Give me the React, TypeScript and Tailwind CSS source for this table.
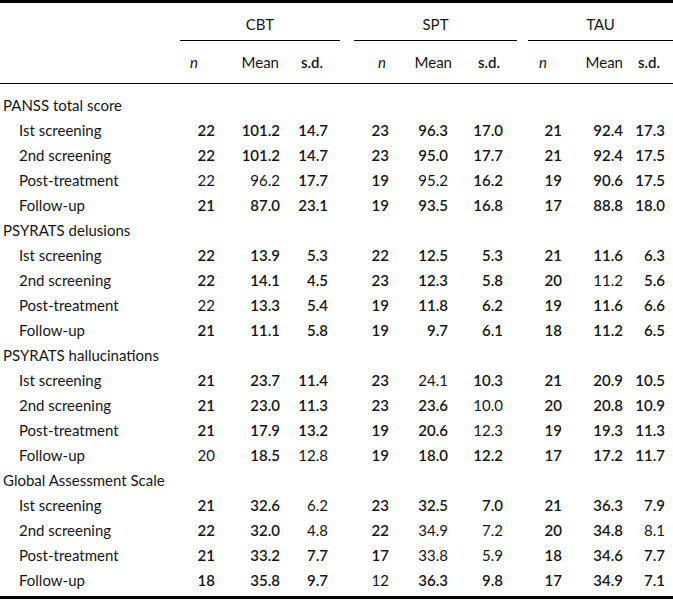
const rowGrid =
  'grid grid-cols-[180px_35px_65px_48px_61px_59px_55px_59px_61px_42px_8px] items-center';

// cells written as "r:" are set in regular weight, the rest in bold
type Row = { label: string; cells: string[] };
type Section = { title: string; rows: Row[] };

const sections: Section[] = [
  {
    title: 'PANSS total score',
    rows: [
      { label: 'Ist screening', cells: ['22', '101.2', '14.7', '23', '96.3', '17.0', '21', '92.4', '17.3'] },
      { label: '2nd screening', cells: ['22', '101.2', '14.7', '23', '95.0', '17.7', '21', '92.4', '17.5'] },
      { label: 'Post-treatment', cells: ['r:22', 'r:96.2', '17.7', '19', 'r:95.2', '16.2', '19', '90.6', '17.5'] },
      { label: 'Follow-up', cells: ['21', '87.0', '23.1', '19', '93.5', '16.8', '17', '88.8', '18.0'] },
    ],
  },
  {
    title: 'PSYRATS delusions',
    rows: [
      { label: 'Ist screening', cells: ['22', '13.9', '5.3', '22', '12.5', '5.3', '21', '11.6', '6.3'] },
      { label: '2nd screening', cells: ['22', '14.1', '4.5', '23', '12.3', '5.8', '20', 'r:11.2', '5.6'] },
      { label: 'Post-treatment', cells: ['r:22', '13.3', '5.4', '19', '11.8', '6.2', '19', '11.6', '6.6'] },
      { label: 'Follow-up', cells: ['21', '11.1', '5.8', '19', '9.7', '6.1', '18', '11.2', '6.5'] },
    ],
  },
  {
    title: 'PSYRATS hallucinations',
    rows: [
      { label: 'Ist screening', cells: ['21', '23.7', '11.4', '23', 'r:24.1', '10.3', '21', '20.9', '10.5'] },
      { label: '2nd screening', cells: ['21', '23.0', '11.3', '23', '23.6', 'r:10.0', '20', '20.8', '10.9'] },
      { label: 'Post-treatment', cells: ['21', '17.9', '13.2', '19', '20.6', 'r:12.3', '19', '19.3', '11.3'] },
      { label: 'Follow-up', cells: ['r:20', '18.5', 'r:12.8', '19', '18.0', '12.2', '17', '17.2', '11.7'] },
    ],
  },
  {
    title: 'Global Assessment Scale',
    rows: [
      { label: 'Ist screening', cells: ['21', '32.6', 'r:6.2', '23', '32.5', '7.0', '21', '36.3', '7.9'] },
      { label: '2nd screening', cells: ['22', '32.0', 'r:4.8', '22', 'r:34.9', 'r:7.2', '20', '34.8', 'r:8.1'] },
      { label: 'Post-treatment', cells: ['21', '33.2', '7.7', '17', 'r:33.8', 'r:5.9', '18', '34.6', '7.7'] },
      { label: 'Follow-up', cells: ['18', '35.8', '9.7', 'r:12', '36.3', '9.8', '17', '34.9', '7.1'] },
    ],
  },
];

function Cell({ value }: { value: string }) {
  const regular = value.startsWith('r:');
  const text = regular ? value.slice(2) : value;
  return <div className={regular ? 'text-right font-normal' : 'text-right font-semibold'}>{text}</div>;
}

export default function App() {
  return (
    <div
      className="w-[673px] h-[601px] bg-white text-[#151515] text-[15px] leading-[18px]"
      style={{ fontFamily: 'Lato, "Open Sans", sans-serif' }}
    >
      <div className="border-t-[3px] border-black">
        {/* Treatment groups */}
        <div className="flex h-[38px] items-end">
          <div className="w-[180px]" />
          <div className="w-[160px] border-b border-black pb-[7px] text-center">CBT</div>
          <div className="ml-[14px] w-[163px] border-b border-black pb-[7px] text-center">SPT</div>
          <div className="ml-[11px] w-[145px] border-b border-black pb-[7px] text-center">TAU</div>
        </div>

        {/* Column headings */}
        <div className={`${rowGrid} h-[43px] border-b border-black`}>
          <div />
          <div className="pr-[17px] text-right italic">n</div>
          <div className="pr-[1px] text-right">Mean</div>
          <div className="pr-[5px] text-right font-semibold">s.d.</div>
          <div className="pr-[3px] text-right italic">n</div>
          <div className="-mr-[4px] text-right">Mean</div>
          <div className="pr-[3px] text-right font-semibold">s.d.</div>
          <div className="pr-[15px] text-right italic">n</div>
          <div className="text-right">Mean</div>
          <div className="pr-[5px] text-right font-semibold">s.d.</div>
          <div />
        </div>

        {/* Body */}
        <div className="border-b-[3px] border-black pt-[8px] pb-[4px]">
          {sections.map((section) => (
            <div key={section.title}>
              <div className="flex h-[25px] items-center pl-[3px]">{section.title}</div>
              {section.rows.map((row) => (
                <div key={row.label} className={`${rowGrid} h-[25px]`}>
                  <div className="pl-[19px]">{row.label}</div>
                  {row.cells.map((c, i) => (
                    <Cell key={i} value={c} />
                  ))}
                  <div />
                </div>
              ))}
            </div>
          ))}
        </div>
      </div>
    </div>
  );
}
